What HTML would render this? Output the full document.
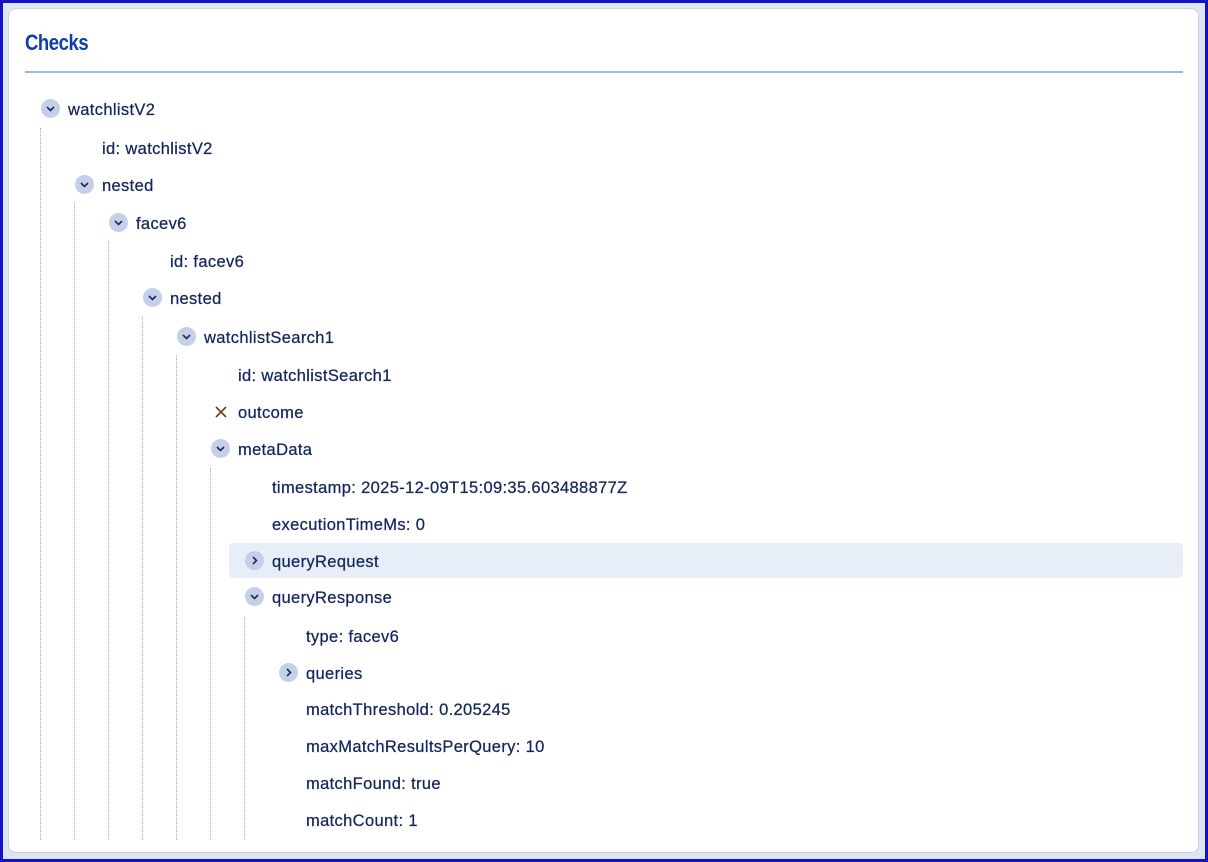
<!DOCTYPE html>
<html><head><style>
body{margin:0;width:1208px;height:862px;overflow:hidden;font-family:"Liberation Sans",sans-serif}
.frame{position:absolute;left:0;top:0;width:1202px;height:856px;border:3px solid #1212c8;background:#dde5f5}
.card{position:absolute;left:8px;top:8px;width:1189px;height:843px;background:#fff;border:1px solid #c8d2e6;border-radius:8px}
h1{position:absolute;left:25px;top:30px;margin:0;font-size:22px;font-weight:bold;color:#0b3fb0;letter-spacing:-0.5px;transform:scaleX(0.84);transform-origin:left}
.rule{position:absolute;left:25px;top:71px;width:1158px;height:2px;background:#a3b6e6}
.t{position:absolute;font-size:16.5px;letter-spacing:0.35px;color:#13265c;line-height:20px;white-space:nowrap;margin-top:1px;-webkit-text-stroke:0.25px #13265c}
.ic{position:absolute;width:19px;height:19px;border-radius:50%;background:#c4d0ea}
.ic svg{position:absolute;left:0;top:0}
.dl{position:absolute;width:0;border-left:1px dotted #a8a8a8;}
.hl{position:absolute;left:229px;top:543px;width:954px;height:35px;background:#e8eef8;border-radius:4px}
</style></head><body>
<div class="frame"></div>
<div class="card"></div>
<h1>Checks</h1>
<div class="rule"></div>
<div class="hl"></div>
<div class="dl" style="left:40px;top:128px;height:712px"></div>
<div class="dl" style="left:74px;top:203px;height:637px"></div>
<div class="dl" style="left:108px;top:241px;height:599px"></div>
<div class="dl" style="left:142px;top:317px;height:523px"></div>
<div class="dl" style="left:176px;top:355px;height:485px"></div>
<div class="dl" style="left:210px;top:468px;height:372px"></div>
<div class="dl" style="left:244px;top:617px;height:223px"></div>

<div class="ic" style="left:41px;top:99px"><svg width="19" height="19"><path d="M6 8l3.5 3.5L13 8" fill="none" stroke="#1f2a44" stroke-width="1.6"/></svg></div>
<div class="ic" style="left:75px;top:175px"><svg width="19" height="19"><path d="M6 8l3.5 3.5L13 8" fill="none" stroke="#1f2a44" stroke-width="1.6"/></svg></div>
<div class="ic" style="left:109px;top:213px"><svg width="19" height="19"><path d="M6 8l3.5 3.5L13 8" fill="none" stroke="#1f2a44" stroke-width="1.6"/></svg></div>
<div class="ic" style="left:143px;top:288px"><svg width="19" height="19"><path d="M6 8l3.5 3.5L13 8" fill="none" stroke="#1f2a44" stroke-width="1.6"/></svg></div>
<div class="ic" style="left:177px;top:327px"><svg width="19" height="19"><path d="M6 8l3.5 3.5L13 8" fill="none" stroke="#1f2a44" stroke-width="1.6"/></svg></div>
<div class="ic" style="left:211px;top:439px"><svg width="19" height="19"><path d="M6 8l3.5 3.5L13 8" fill="none" stroke="#1f2a44" stroke-width="1.6"/></svg></div>
<div class="ic" style="left:245px;top:587px"><svg width="19" height="19"><path d="M6 8l3.5 3.5L13 8" fill="none" stroke="#1f2a44" stroke-width="1.6"/></svg></div>
<div class="ic" style="left:245px;top:551px"><svg width="19" height="19"><path d="M8 6l3.5 3.5L8 13" fill="none" stroke="#1f2a44" stroke-width="1.6"/></svg></div>
<div class="ic" style="left:279px;top:663px"><svg width="19" height="19"><path d="M8 6l3.5 3.5L8 13" fill="none" stroke="#1f2a44" stroke-width="1.6"/></svg></div>
<svg style="position:absolute;left:214px;top:405px" width="14" height="14"><path d="M2 2l10 10M12 2L2 12" stroke="#7a3a1a" stroke-width="1.6"/></svg>

<div class="t" style="left:68px;top:99px">watchlistV2</div>
<div class="t" style="left:102px;top:138px">id: watchlistV2</div>
<div class="t" style="left:102px;top:175px">nested</div>
<div class="t" style="left:136px;top:213px">facev6</div>
<div class="t" style="left:170px;top:251px">id: facev6</div>
<div class="t" style="left:170px;top:288px">nested</div>
<div class="t" style="left:204px;top:327px">watchlistSearch1</div>
<div class="t" style="left:238px;top:365px">id: watchlistSearch1</div>
<div class="t" style="left:238px;top:402px">outcome</div>
<div class="t" style="left:238px;top:439px">metaData</div>
<div class="t" style="left:272px;top:477px">timestamp: 2025-12-09T15:09:35.603488877Z</div>
<div class="t" style="left:272px;top:514px">executionTimeMs: 0</div>
<div class="t" style="left:272px;top:551px">queryRequest</div>
<div class="t" style="left:272px;top:587px">queryResponse</div>
<div class="t" style="left:306px;top:626px">type: facev6</div>
<div class="t" style="left:306px;top:663px">queries</div>
<div class="t" style="left:306px;top:699px">matchThreshold: 0.205245</div>
<div class="t" style="left:306px;top:736px">maxMatchResultsPerQuery: 10</div>
<div class="t" style="left:306px;top:773px">matchFound: true</div>
<div class="t" style="left:306px;top:810px">matchCount: 1</div>
</body></html>
